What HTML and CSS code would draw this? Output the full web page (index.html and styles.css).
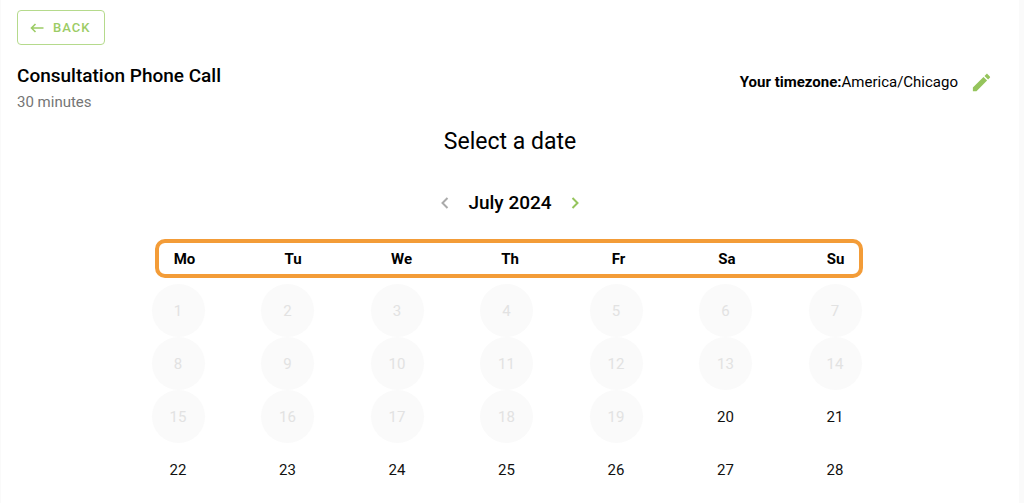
FILE: index.html
```
<!DOCTYPE html>
<html lang="en">
<head>
    <meta charset="UTF-8">
    <meta name="viewport" content="width=device-width, initial-scale=1.0">
    <title>Consultation Phone Call</title>
    <link rel="stylesheet" href="styles.css">
</head>
<body>
    <main class="booking">
        <button type="button" class="back-btn">
            <svg class="back-icon" viewBox="0 0 14 12" aria-hidden="true"><path d="M13.5 6H1.5M5.5 2L1.5 6L5.5 10"/></svg>
            BACK
        </button>

        <header class="service">
            <div class="service-info">
                <h1>Consultation Phone Call</h1>
                <p>30 minutes</p>
            </div>
            <div class="timezone">
                <span><strong>Your timezone:</strong>America/Chicago</span>
                <button type="button" class="icon-btn edit" aria-label="Edit timezone">
                    <svg viewBox="0 0 24 24" aria-hidden="true"><path d="M20.71 7.04c.39-.39.39-1.04 0-1.41l-2.34-2.34c-.37-.39-1.02-.39-1.41 0l-1.84 1.83 3.75 3.75M3 17.25V21h3.75L17.81 9.93l-3.75-3.75L3 17.25z"/></svg>
                </button>
            </div>
        </header>

        <h2>Select a date</h2>

        <div class="month">
            <button type="button" class="icon-btn prev" aria-label="Previous month" disabled>
                <svg viewBox="0 0 8 12" aria-hidden="true"><path d="M6.5 1L1.5 6L6.5 11"/></svg>
            </button>
            <h3>July 2024</h3>
            <button type="button" class="icon-btn next" aria-label="Next month">
                <svg viewBox="0 0 8 12" aria-hidden="true"><path d="M1.5 1L6.5 6L1.5 11"/></svg>
            </button>
        </div>

        <div class="calendar">
            <div class="weekdays">
                <span>Mo</span>
                <span>Tu</span>
                <span>We</span>
                <span>Th</span>
                <span>Fr</span>
                <span>Sa</span>
                <span>Su</span>
            </div>
            <div class="week">
                <button type="button" disabled>1</button>
                <button type="button" disabled>2</button>
                <button type="button" disabled>3</button>
                <button type="button" disabled>4</button>
                <button type="button" disabled>5</button>
                <button type="button" disabled>6</button>
                <button type="button" disabled>7</button>
            </div>
            <div class="week">
                <button type="button" disabled>8</button>
                <button type="button" disabled>9</button>
                <button type="button" disabled>10</button>
                <button type="button" disabled>11</button>
                <button type="button" disabled>12</button>
                <button type="button" disabled>13</button>
                <button type="button" disabled>14</button>
            </div>
            <div class="week">
                <button type="button" disabled>15</button>
                <button type="button" disabled>16</button>
                <button type="button" disabled>17</button>
                <button type="button" disabled>18</button>
                <button type="button" disabled>19</button>
                <button type="button">20</button>
                <button type="button">21</button>
            </div>
            <div class="week">
                <button type="button">22</button>
                <button type="button">23</button>
                <button type="button">24</button>
                <button type="button">25</button>
                <button type="button">26</button>
                <button type="button">27</button>
                <button type="button">28</button>
            </div>
        </div>
    </main>
</body>
</html>
```
FILE: styles.css
```
* {
    box-sizing: border-box;
}
body {
    margin: 0;
    padding: 0 5px 0 1px;
    background-color: #fafafa;
    color: #000;
    font-family: Roboto, sans-serif;
    font-size: 15px;
}
h1, h2, h3, p {
    margin: 0;
}
button {
    font-family: inherit;
    font-size: inherit;
    background: none;
    border: none;
    padding: 0;
    cursor: pointer;
}
svg {
    display: block;
}
.booking {
    min-height: 100vh;
    padding: 10px 16px 6px;
    background-color: #fff;
}
.back-btn {
    display: flex;
    align-items: center;
    gap: 9px;
    height: 35px;
    padding: 0 14px 0 12px;
    border: 1px solid #b5da8c;
    border-radius: 4px;
    color: #9ccc65;
    font-size: 13px;
    font-weight: 500;
    letter-spacing: 1px;
}
.back-icon {
    width: 14px;
    height: 12px;
    fill: none;
    stroke: currentColor;
    stroke-width: 1.6;
}
.service {
    display: flex;
    justify-content: space-between;
    align-items: center;
    margin-top: 19px;
    padding-right: 10px;
}
h1 {
    font-size: 19px;
    font-weight: 500;
    line-height: 24px;
}
.service-info p {
    margin-top: 4px;
    color: #757575;
    line-height: 20px;
}
.timezone {
    display: flex;
    align-items: center;
    gap: 12px;
    margin-bottom: 12px;
}
.timezone strong {
    font-weight: 700;
}
.edit svg {
    width: 23px;
    height: 23px;
    fill: #95c45c;
}
h2 {
    margin-top: 16px;
    font-size: 23px;
    font-weight: 400;
    line-height: 28px;
    text-align: center;
}
.month {
    display: flex;
    justify-content: center;
    align-items: center;
    gap: 19px;
    margin-top: 33px;
}
h3 {
    font-size: 19px;
    font-weight: 500;
    line-height: 28px;
}
.month svg {
    width: 8px;
    height: 12px;
    fill: none;
    stroke: #95c45c;
    stroke-width: 2;
}
.month .prev svg {
    stroke: #aaa;
}
.calendar {
    max-width: 717px;
    margin: 22px auto 0;
    padding-right: 7px;
}
.weekdays {
    display: flex;
    justify-content: space-between;
    align-items: center;
    height: 39px;
    margin: 0 -1px 6px 3px;
    padding: 0 12px 0 15px;
    border: 4px solid #f39c38;
    border-radius: 10px;
    font-weight: 700;
}
.weekdays span {
    width: 22px;
    text-align: center;
}
.week {
    display: flex;
    justify-content: space-between;
}
.week button {
    width: 53px;
    height: 53px;
    border-radius: 50%;
    color: #111;
}
.week button:disabled {
    background-color: #fafafa;
    color: #e2e2e2;
    cursor: default;
}
```
